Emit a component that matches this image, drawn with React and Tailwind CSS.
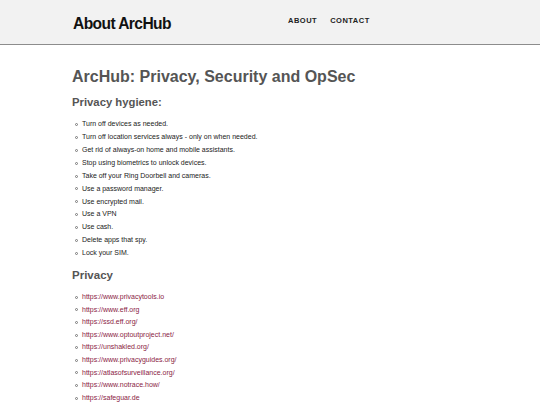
import React from "react";

const hygiene = [
  "Turn off devices as needed.",
  "Turn off location services always - only on when needed.",
  "Get rid of always-on home and mobile assistants.",
  "Stop using biometrics to unlock devices.",
  "Take off your Ring Doorbell and cameras.",
  "Use a password manager.",
  "Use encrypted mail.",
  "Use a VPN",
  "Use cash.",
  "Delete apps that spy.",
  "Lock your SIM.",
];

const links = [
  "https://www.privacytools.io",
  "https://www.eff.org",
  "https://ssd.eff.org/",
  "https://www.optoutproject.net/",
  "https://unshakled.org/",
  "https://www.privacyguides.org/",
  "https://atlasofsurveillance.org/",
  "https://www.notrace.how/",
  "https://safeguar.de",
];

function Item({ children, link, h }) {
  return (
    <li className={"flex items-center " + (link ? "h-[12.65px]" : "h-[12.9px]")}>
      <span className="w-[3px] h-[3px] rounded-full border-[0.6px] border-[#777] mr-[4px] ml-[3px] shrink-0" />
      {link ? (
        <a className="text-[#8a1c44]">{children}</a>
      ) : (
        <span className="text-[#222]">{children}</span>
      )}
    </li>
  );
}

export default function App() {
  return (
    <div className="w-[540px] h-[405px] overflow-hidden bg-white" style={{ fontFamily: '"Liberation Sans", Arial, sans-serif' }}>
      <header className="h-[45px] bg-[#f2f2f2] border-b border-[#8c8c8c] flex items-center">
        <div className="pl-[73px] w-[288px] pt-[3px]">
          <span className="text-[15.6px] font-bold tracking-[-0.6px] text-[#111]">About ArcHub</span>
        </div>
        <nav className="flex gap-[13px] text-[7.5px] font-bold tracking-[0.5px] text-[#222] pb-[2px]">
          <span>ABOUT</span>
          <span>CONTACT</span>
        </nav>
      </header>
      <main className="pl-[72px] pt-[21px]">
        <h1 className="text-[16px] font-bold text-[#555] leading-[22px]">ArcHub: Privacy, Security and OpSec</h1>
        <h2 className="text-[11.3px] font-bold text-[#555] leading-[14px] mt-[7px]">Privacy hygiene:</h2>
        <ul className="text-[7px] mt-[9px]">
          {hygiene.map((t) => (
            <Item key={t}>{t}</Item>
          ))}
        </ul>
        <h2 className="text-[11.5px] font-bold text-[#555] leading-[14px] mt-[8px]">Privacy</h2>
        <ul className="text-[7px] mt-[9px]">
          {links.map((t) => (
            <Item key={t} link>
              {t}
            </Item>
          ))}
        </ul>
      </main>
    </div>
  );
}
